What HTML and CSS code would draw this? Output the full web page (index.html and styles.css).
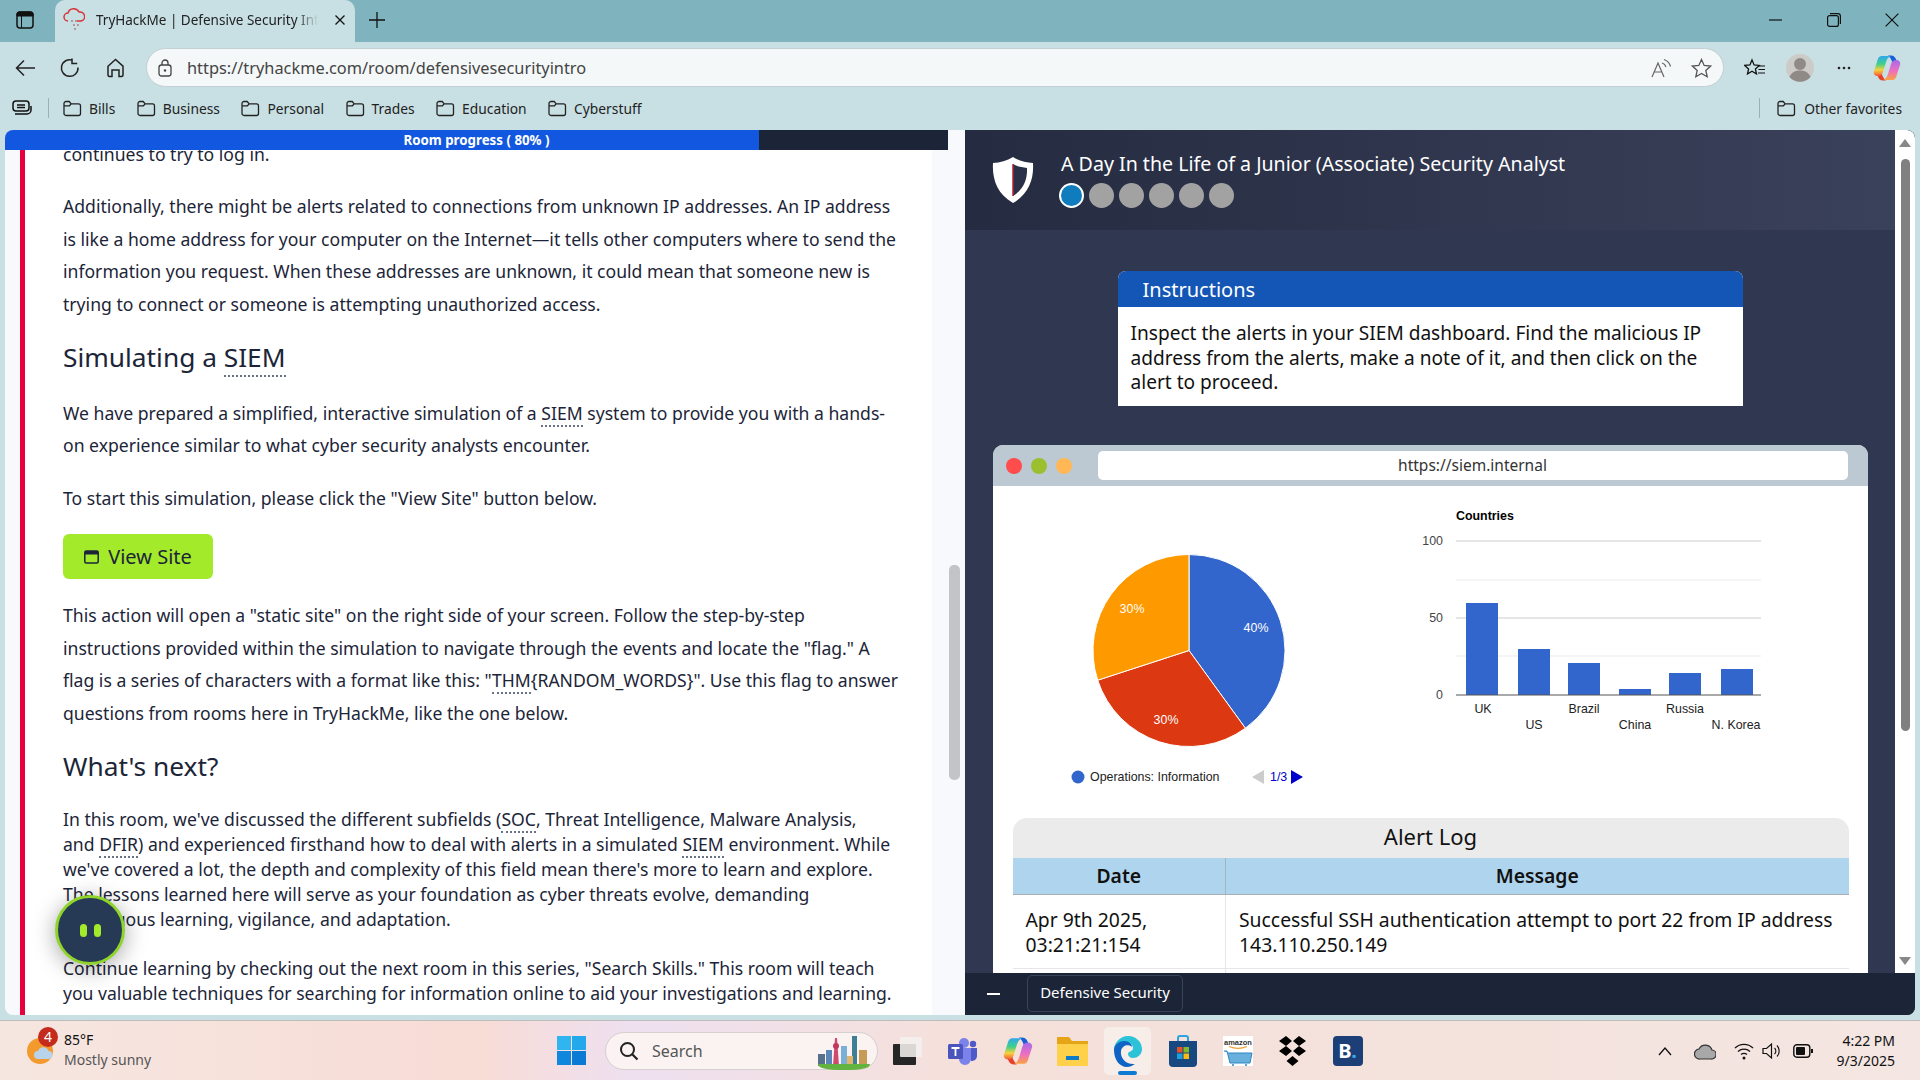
FILE: index.html
```html
<!DOCTYPE html>
<html lang="en">
<head>
<meta charset="utf-8">
<title>TryHackMe | Defensive Security Intro</title>
<link rel="stylesheet" href="styles.css">
</head>
<body>
<svg class="defs" width="0" height="0" aria-hidden="true">
  <defs>
    <symbol id="folder" viewBox="0 0 20 20"><path d="M2 5.500A2 2 0 0 1 4 3.500h3.200l2 2.400H16.500a2 2 0 0 1 2 2v7.600a2 2 0 0 1-2 2H4a2 2 0 0 1-2-2zM2 7.800h5.400l1.800-1.900" fill="none" stroke="#222" stroke-width="1.300"/></symbol>
    <linearGradient id="cop" x1="0" y1="0" x2="0" y2="1"><stop offset="0" stop-color="#2fa8ee"/><stop offset=".4" stop-color="#3fd08a"/><stop offset=".7" stop-color="#f7d23c"/><stop offset="1" stop-color="#f2563a"/></linearGradient>
    <linearGradient id="cop2" x1="0" y1="0" x2="0" y2="1"><stop offset="0" stop-color="#a66be8"/><stop offset=".55" stop-color="#ee6fc0"/><stop offset="1" stop-color="#fba23f"/></linearGradient>
    <symbol id="copilot" viewBox="0 0 28 28">
      <path d="M15 1.500h3c3 0 4.500 2 5.500 5l1 3c-1-1.500-3-1.500-5 0C19 6 17 3 15 1.500z" fill="#1a5fd8"/>
      <path d="M13 26.500h-3c-3 0-4.500-2-5.500-5l-1-3c1 1.500 3 1.500 5 0C9 22 11 25 13 26.500z" fill="#e8402a"/>
      <path d="M9 2h9c-3 1-4 3-5 6l-3 10c-1 3-3 4-5 4-3 0-5-2-4-5L4 8C5 4 6 2 9 2z" fill="url(#cop)"/>
      <path d="M19 26h-9c3-1 4-3 5-6l3-10c1-3 3-4 5-4 3 0 5 2 4 5l-3 9c-1 4-2 6-5 6z" fill="url(#cop2)"/>
    </symbol>
  </defs>
</svg>

<header class="titlebar">
  <svg class="ic-side" width="18" height="18" viewBox="0 0 18 18"><rect x="1" y="1" width="16" height="16" rx="3" fill="none" stroke="#111" stroke-width="1.500"/><path d="M1 5h16V3a2 2 0 0 0-2-2H3a2 2 0 0 0-2 2zM5.500 5v12" fill="#111" stroke="#111" stroke-width="1"/></svg>
  <div class="tab">
    <svg class="favicon" width="22" height="24" viewBox="0 0 22 24"><path d="M5 13a4 4 0 0 1 0-8 6 6 0 0 1 11-1 4.500 4.500 0 0 1 2 9h-4" fill="none" stroke="#d8343a" stroke-width="1.500"/><path d="M8 12h2v2H8zm4 0h2v2h-2zm-2 4h2v2h-2zm4 0h2v2h-2zm-3 4h2v2h-2z" fill="#b09aa0"/></svg>
    <span class="tab-title">TryHackMe | Defensive Security Intro</span>
    <svg class="tab-x" width="12" height="12" viewBox="0 0 12 12"><path d="M1.500 1.500l9 9m0-9l-9 9" stroke="#111" stroke-width="1.300"/></svg>
  </div>
  <svg class="tab-plus" width="18" height="18" viewBox="0 0 18 18"><path d="M9 1v16M1 9h16" stroke="#111" stroke-width="1.300"/></svg>
  <div class="winctl">
    <svg width="13" height="18" viewBox="0 0 13 18"><path d="M0 9h13" stroke="#111" stroke-width="1.200"/></svg>
    <svg width="14" height="14" viewBox="0 0 14 14"><rect x=".6" y="2.600" width="10.800" height="10.800" rx="2" fill="none" stroke="#111" stroke-width="1.200"/><path d="M3 .6h8a2.500 2.500 0 0 1 2.400 2.400v8" fill="none" stroke="#111" stroke-width="1.200"/></svg>
    <svg width="14" height="14" viewBox="0 0 14 14"><path d="M.6.600l12.800 12.800m0-12.800L.6 13.400" stroke="#111" stroke-width="1.200"/></svg>
  </div>
</header>

<nav class="toolbar">
  <svg class="tool back" width="20" height="18" viewBox="0 0 20 18"><path d="M20 9H1.500M9 1.500L1.500 9 9 16.500" fill="none" stroke="#222" stroke-width="1.500"/></svg>
  <svg class="tool reload" width="20" height="20" viewBox="0 0 20 20"><path d="M12.500 2.200A8.300 8.300 0 1 0 18 9.500M12 .5v5h5.200" fill="none" stroke="#222" stroke-width="1.500"/></svg>
  <svg class="tool home" width="19" height="20" viewBox="0 0 19 20"><path d="M2 8.200L9.500 1.500 17 8.200V17a1.500 1.500 0 0 1-1.500 1.500H13V12H6v6.500H3.500A1.500 1.500 0 0 1 2 17z" fill="none" stroke="#222" stroke-width="1.500"/></svg>
  <div class="address">
    <svg width="14" height="18" viewBox="0 0 14 18"><rect x="1" y="6" width="12" height="11" rx="2.500" fill="none" stroke="#444" stroke-width="1.300"/><path d="M4 6V4a3 3 0 0 1 6 0v2" fill="none" stroke="#444" stroke-width="1.300"/><circle cx="7" cy="11.500" r="1.200" fill="#444"/></svg>
    <span class="url">https://tryhackme.com/room/defensivesecurityintro</span>
    <svg class="read" width="21" height="20" viewBox="0 0 21 20"><path d="M1 19L7 5l6 14M3.500 14h7" fill="none" stroke="#666" stroke-width="1.200"/><path d="M11 5a6 6 0 0 1 4 4M13 1.500a10 10 0 0 1 6.500 7" fill="none" stroke="#666" stroke-width="1.200"/></svg>
    <svg class="star" width="21" height="20" viewBox="0 0 21 20"><path d="M10.500 1.500l2.700 5.900 6.400.7-4.800 4.300 1.400 6.300-5.700-3.300-5.700 3.300 1.400-6.300L1.400 8.100l6.400-.7z" fill="none" stroke="#555" stroke-width="1.300"/></svg>
  </div>
  <svg class="favs" width="21" height="20" viewBox="0 0 21 20"><path d="M8 2l2.100 4.900 5.200.5-3.900 3.500 1.100 5.100L8 13.300l-4.500 2.700 1.100-5.100L.7 7.400l5.200-.5z" fill="none" stroke="#111" stroke-width="1.300"/><path d="M14 8h7M14.500 11.500H21M14 15h7" stroke="#111" stroke-width="1.100"/></svg>
  <svg class="profile" width="28" height="28" viewBox="0 0 28 28"><circle cx="14" cy="14" r="14" fill="#cdcbc8"/><circle cx="14" cy="10" r="6" fill="#8f8a85"/><path d="M3.500 23c2-5 6-6.500 10.500-6.500S22.500 18 24.500 23a14 14 0 0 1-21 0z" fill="#8f8a85"/></svg>
  <svg class="more" width="14" height="4" viewBox="0 0 14 4"><circle cx="2" cy="2" r="1.300" fill="#222"/><circle cx="7" cy="2" r="1.300" fill="#222"/><circle cx="12" cy="2" r="1.300" fill="#222"/></svg>
  <svg class="copilot-top" width="28" height="28"><use href="#copilot"/></svg>
</nav>

<div class="favbar">
  <svg class="coll" width="20" height="16" viewBox="0 0 20 16"><rect x="1" y="1" width="16" height="10" rx="3" fill="none" stroke="#111" stroke-width="1.500"/><path d="M5 5h8M5 7.500h8" stroke="#111" stroke-width="1.500"/><path d="M3 14h12a4 4 0 0 0 4-4V6" fill="none" stroke="#111" stroke-width="1.500"/></svg>
  <span class="sep"></span>
  <span class="fav"><svg width="20" height="20"><use href="#folder"/></svg>Bills</span>
  <span class="fav"><svg width="20" height="20"><use href="#folder"/></svg>Business</span>
  <span class="fav"><svg width="20" height="20"><use href="#folder"/></svg>Personal</span>
  <span class="fav"><svg width="20" height="20"><use href="#folder"/></svg>Trades</span>
  <span class="fav"><svg width="20" height="20"><use href="#folder"/></svg>Education</span>
  <span class="fav"><svg width="20" height="20"><use href="#folder"/></svg>Cyberstuff</span>
  <span class="sep sep-right"></span>
  <span class="fav"><svg width="20" height="20"><use href="#folder"/></svg>Other favorites</span>
</div>

<main class="main">
  <section class="left">
    <div class="progress">Room progress ( 80% )</div>
    <div class="left-body">
      <div class="viewport">
        <article class="article">
          <p>continues to try to log in.</p>
          <p>Additionally, there might be alerts related to connections from unknown IP addresses. An IP address<br>is like a home address for your computer on the Internet—it tells other computers where to send the<br>information you request. When these addresses are unknown, it could mean that someone new is<br>trying to connect or someone is attempting unauthorized access.</p>
          <h2>Simulating a <abbr>SIEM</abbr></h2>
          <p class="gap">We have prepared a simplified, interactive simulation of a <abbr>SIEM</abbr> system to provide you with a hands-<br>on experience similar to what cyber security analysts encounter.</p>
          <p>To start this simulation, please click the "View Site" button below.</p>
          <button class="view-site"><svg width="15" height="14" viewBox="0 0 15 14"><rect x=".8" y="1" width="13.400" height="12" rx="1.500" fill="none" stroke="#1c2538" stroke-width="1.500"/><rect x=".8" y="1" width="13.400" height="3.500" fill="#1c2538"/></svg>View Site</button>
          <p>This action will open a "static site" on the right side of your screen. Follow the step-by-step<br>instructions provided within the simulation to navigate through the events and locate the "flag." A<br>flag is a series of characters with a format like this: "<abbr>THM</abbr>{RANDOM_WORDS}". Use this flag to answer<br>questions from rooms here in TryHackMe, like the one below.</p>
          <h2 class="next">What's next?</h2>
          <p class="tight">In this room, we've discussed the different subfields (<abbr>SOC</abbr>, Threat Intelligence, Malware Analysis,<br>and <abbr>DFIR</abbr>) and experienced firsthand how to deal with alerts in a simulated <abbr>SIEM</abbr> environment. While<br>we've covered a lot, the depth and complexity of this field mean there's more to learn and explore.<br>The lessons learned here will serve as your foundation as cyber threats evolve, demanding<br>continuous learning, vigilance, and adaptation.</p>
          <p class="tight">Continue learning by checking out the next room in this series, "Search Skills." This room will teach<br>you valuable techniques for searching for information online to aid your investigations and learning.</p>
        </article>
      </div>
      <div class="left-rail"><div class="left-thumb"></div></div>
      <div class="pause"><i></i><i></i></div>
    </div>
  </section>

  <section class="right">
    <div class="right-top">
      <div class="right-col">
        <div class="task-head">
          <svg class="shield" width="42" height="46" viewBox="0 0 42 46"><path d="M21 0c6 4 13 5.500 20 6 1 16-4 31-20 40C5 37 0 22 1 6c7-.5 14-2 20-6z" fill="#fff"/><path d="M21 7c4 2.500 9 3.500 14 4 .5 11-3 21-14 28z" fill="#2a3047"/><path d="M21 7v32" stroke="#b3202e" stroke-width="1.500"/></svg>
          <div>
            <div class="task-title">A Day In the Life of a Junior (Associate) Security Analyst</div>
            <div class="dots"><span class="dot on"></span><span class="dot"></span><span class="dot"></span><span class="dot"></span><span class="dot"></span><span class="dot"></span></div>
          </div>
        </div>
        <div class="task-body">
          <div class="instructions">
            <div class="ins-head">Instructions</div>
            <div class="ins-text">Inspect the alerts in your SIEM dashboard. Find the malicious IP address from the alerts, make a note of it, and then click on the alert to proceed.</div>
          </div>
          <div class="window">
            <div class="win-bar">
              <span class="light red"></span><span class="light green"></span><span class="light amber"></span>
              <div class="win-url">https://siem.internal</div>
            </div>
            <svg class="charts" width="874" height="332" viewBox="993 486 874 332">
              <path d="M1189 650.500V554.500A96 96 0 0 1 1245.400 728.200Z" fill="#3366cc" stroke="#fff"/>
              <path d="M1189 650.500L1245.400 728.200A96 96 0 0 1 1097.700 680.200Z" fill="#dc3912" stroke="#fff"/>
              <path d="M1189 650.500L1097.700 680.200A96 96 0 0 1 1189 554.500Z" fill="#ff9900" stroke="#fff"/>
              <g class="pct"><text x="1256" y="632">40%</text><text x="1166" y="724">30%</text><text x="1132" y="613">30%</text></g>
              <circle cx="1078" cy="777" r="6.500" fill="#3366cc"/>
              <text class="legend" x="1090" y="781">Operations: Information</text>
              <path d="M1264 770v14l-12-7z" fill="#ccc"/>
              <text class="pager" x="1270" y="781">1/3</text>
              <path d="M1291 770v14l12-7z" fill="#0000cc"/>
              <text class="chart-title" x="1456" y="520">Countries</text>
              <path d="M1456 541h305M1456 618h305" stroke="#ccc" stroke-width="1"/>
              <path d="M1456 580h305M1456 656h305" stroke="#ebebeb" stroke-width="1"/>
              <g fill="#3366cc">
                <rect x="1466" y="603" width="32" height="92"/><rect x="1518" y="649" width="32" height="46"/><rect x="1568" y="663" width="32" height="32"/><rect x="1619" y="689" width="32" height="6"/><rect x="1669" y="673" width="32" height="22"/><rect x="1721" y="669" width="32" height="26"/>
              </g>
              <path d="M1456 695h305" stroke="#555" stroke-width="1"/>
              <g class="axis-y"><text x="1443" y="545">100</text><text x="1443" y="622">50</text><text x="1443" y="699">0</text></g>
              <g class="axis-x"><text x="1483" y="713">UK</text><text x="1534" y="729">US</text><text x="1584" y="713">Brazil</text><text x="1635" y="729">China</text><text x="1685" y="713">Russia</text><text x="1736" y="729">N. Korea</text></g>
            </svg>
            <div class="log">
              <div class="log-title">Alert Log</div>
              <table class="log-table">
                <thead><tr><th class="col-date">Date</th><th>Message</th></tr></thead>
                <tbody>
                  <tr><td>Apr 9th 2025,<br>03:21:21:154</td><td>Successful SSH authentication attempt to port 22 from IP address<br>143.110.250.149</td></tr>
                  <tr><td>&nbsp;</td><td>&nbsp;</td></tr>
                </tbody>
              </table>
            </div>
          </div>
        </div>
      </div>
      <div class="right-rail">
        <svg width="14" height="10" viewBox="0 0 14 10"><path d="M7 1l6 8H1z" fill="#888"/></svg>
        <div class="right-thumb"></div>
        <svg class="rail-down" width="14" height="10" viewBox="0 0 14 10"><path d="M7 9L1 1h12z" fill="#888"/></svg>
      </div>
    </div>
    <div class="dock">
      <span class="dock-min"></span>
      <span class="dock-tab">Defensive Security</span>
    </div>
  </section>
</main>

<footer class="taskbar">
  <div class="weather">
    <svg class="sun" width="28" height="28" viewBox="0 0 28 28"><circle cx="13" cy="14" r="13" fill="#f29a2e"/><path d="M11 22a4 4 0 0 1 0-8 5.500 5.500 0 0 1 10.500 0 4 4 0 0 1 0 8z" fill="#b9d3ea"/></svg>
    <span class="badge">4</span>
    <div class="w-text"><div class="w-temp">85°F</div><div class="w-desc">Mostly sunny</div></div>
  </div>
  <svg class="winlogo" width="29" height="29" viewBox="0 0 29 29"><rect width="14" height="14" fill="#2fb6f0"/><rect x="15" width="14" height="14" fill="#23a8ec"/><rect y="15" width="14" height="14" fill="#0f87dc"/><rect x="15" y="15" width="14" height="14" fill="#0a7ad4"/></svg>
  <div class="search">
    <svg width="20" height="20" viewBox="0 0 20 20"><circle cx="8.500" cy="8.500" r="6.500" fill="none" stroke="#222" stroke-width="2"/><path d="M13 13l5.500 5.500" stroke="#222" stroke-width="2.200"/></svg>
    <span>Search</span>
    <svg class="city" width="58" height="38" viewBox="0 0 58 38"><rect x="2" y="22" width="7" height="12" fill="#56708c"/><rect x="10" y="18" width="6" height="16" fill="#5b86b8"/><path d="M17 34L19 6h2l2 28z" fill="#d04a70"/><circle cx="20" cy="14" r="3" fill="#c4365e"/><rect x="25" y="14" width="6" height="20" fill="#7ab0d8"/><rect x="36" y="4" width="5" height="30" fill="#3f7f96"/><rect x="31" y="24" width="6" height="10" fill="#e3b56a"/><rect x="43" y="18" width="8" height="16" fill="#c79a55"/><path d="M2 32h52c0 4-8 6-26 6S2 36 2 32z" fill="#62b33f"/></svg>
  </div>
  <div class="apps">
    <div class="app"><svg width="30" height="28" viewBox="0 0 30 28"><rect y="7" width="23" height="21" rx="1" fill="#262626"/><rect x="7" width="22" height="20" rx="1" fill="#f4f0ee" opacity=".88"/></svg></div>
    <div class="app"><svg width="30" height="28" viewBox="0 0 30 28"><circle cx="16" cy="6" r="5" fill="#7b83eb"/><circle cx="25" cy="7" r="3.200" fill="#5059c9"/><path d="M20 11h9v8a5 5 0 0 1-5 5h-1z" fill="#5059c9"/><path d="M9 11h14v11a6 6 0 0 1-12 0z" fill="#7b83eb"/><rect y="7" width="15" height="15" rx="1.500" fill="#4b53bc"/><path d="M3.500 11h8M7.500 11v8" stroke="#fff" stroke-width="1.800"/></svg></div>
    <div class="app"><svg width="30" height="30"><use href="#copilot"/></svg></div>
    <div class="app"><svg width="31" height="30" viewBox="0 0 31 30"><path d="M0 1h12l3 4h16v24H0z" fill="#e6a516"/><path d="M0 8h31v22H0z" fill="#ffd04a"/><rect x="9" y="20" width="13" height="4" fill="#0d7bc9"/></svg></div>
    <div class="app app-active"><svg width="30" height="32" viewBox="0 0 30 32"><path d="M15 1c8 0 14 6 14 13 0 6-5 9-9 9-3 0-5-2-5-4 0-3 5-2 5-6 0-3-3-6-7-6C7 7 2 12 1 17 0 8 7 1 15 1z" fill="#2cc3d8"/><path d="M1 15c0-5 5-9 10-9 5 0 8 3 8 6-3-3-10-2-11 4-1 7 5 14 14 13-3 2-5 3-8 3C6 32 1 24 1 15z" fill="#0f63c4"/></svg><span class="active-bar"></span></div>
    <div class="app"><svg width="28" height="32" viewBox="0 0 28 32"><path d="M9 6V3a2 2 0 0 1 2-2h6a2 2 0 0 1 2 2v3" fill="none" stroke="#2da3e0" stroke-width="2"/><path d="M0 6h28v22a4 4 0 0 1-4 4H4a4 4 0 0 1-4-4z" fill="#17487f"/><rect x="8" y="12" width="5.500" height="5.500" fill="#e8502a"/><rect x="14.500" y="12" width="5.500" height="5.500" fill="#7fba2a"/><rect x="8" y="18.500" width="5.500" height="5.500" fill="#1ba1e2"/><rect x="14.500" y="18.500" width="5.500" height="5.500" fill="#fcb813"/></svg></div>
    <div class="app"><svg width="30" height="30" viewBox="0 0 30 30"><rect width="30" height="30" fill="#fff"/><text class="amz" x="15" y="9">amazon</text><path d="M6 10.500c6 2.500 12 2.500 18 0" fill="none" stroke="#f0a030" stroke-width="1.200"/><path d="M1 15h3l3 12h20l2-10H5" fill="#6ab0dc" stroke="#2f86c4" stroke-width="1"/><circle cx="10" cy="29" r="1" fill="#2f86c4"/><circle cx="23" cy="29" r="1" fill="#2f86c4"/></svg></div>
    <div class="app"><svg width="29" height="30" viewBox="0 0 29 30"><path d="M8 0l6 5-6 5-7-5zM21 0l7 5-7 5-6-5zM8 10l6 5-6 5-7-5zM21 10l7 5-7 5-6-5zM14.500 20l6 5-6 5-6-5z" fill="#000"/></svg></div>
    <div class="app"><div class="booking">B<em>.</em></div></div>
  </div>
  <div class="tray">
    <svg class="t-up" width="14" height="10" viewBox="0 0 14 10"><path d="M1 9l6-7 6 7" fill="none" stroke="#111" stroke-width="1.300"/></svg>
    <svg class="t-cloud" width="22" height="20" viewBox="0 0 22 20"><path d="M6 18a5 5 0 0 1-1-10 7 7 0 0 1 13 1 4.500 4.500 0 0 1-1 9z" fill="#a8a8a8" stroke="#333" stroke-width="1.200"/></svg>
    <svg class="t-wifi" width="20" height="18" viewBox="0 0 20 18"><path d="M1 6a13 13 0 0 1 18 0M4 9.500a9 9 0 0 1 12 0M7 12.500a5 5 0 0 1 6 0" fill="none" stroke="#111" stroke-width="1.300"/><circle cx="10" cy="16" r="1.500" fill="#111"/></svg>
    <svg class="t-sound" width="20" height="18" viewBox="0 0 20 18"><path d="M1 6.500h3.500L9.500 2v14l-5-4.500H1z" fill="none" stroke="#111" stroke-width="1.200"/><path d="M12.500 6a4 4 0 0 1 0 6M15 3.500a8 8 0 0 1 0 11" fill="none" stroke="#111" stroke-width="1.100"/></svg>
    <svg class="t-batt" width="20" height="14" viewBox="0 0 20 14"><rect x=".8" y=".8" width="16" height="12.400" rx="3" fill="none" stroke="#111" stroke-width="1.400"/><rect x="3" y="3" width="9" height="8" rx="1" fill="#111"/><rect x="18" y="5" width="2" height="4" fill="#111"/></svg>
    <div class="clock"><div>4:22 PM</div><div>9/3/2025</div></div>
  </div>
</footer>
</body>
</html>
```
FILE: styles.css
```css
* { box-sizing: border-box; }
html, body { margin: 0; height: 100%; }
body {
  width: 1920px; height: 1080px; overflow: hidden;
  display: flex; flex-direction: column;
  background: #c8dfe3; color: #111;
  font-family: "Noto Sans", "Open Sans", sans-serif;
}
.defs { position: absolute; }

/* title bar */
.titlebar { height: 42px; flex: none; background: #7fb4bf; display: flex; align-items: center; padding-bottom: 3px; }
.ic-side { margin-left: 16px; flex: none; }
.tab {
  margin-left: 21px; width: 300px; height: 42px; flex: none; align-self: flex-start;
  background: #c8dfe3; border-radius: 10px 10px 0 0;
  display: flex; align-items: center; padding: 0 0 3px 8px;
}
.favicon { flex: none; }
.tab-title {
  margin-left: 11px; width: 222px; overflow: hidden; white-space: nowrap;
  font-size: 13.500px; color: #222;
  -webkit-mask-image: linear-gradient(to right, #000 90%, transparent 100%);
  mask-image: linear-gradient(to right, #000 90%, transparent 100%);
}
.tab-x { margin-left: 16px; flex: none; }
.tab-plus { margin-left: 13px; flex: none; }
.winctl { margin-left: auto; display: flex; align-items: center; gap: 45px; padding-right: 21px; }
.winctl svg:last-child { margin-left: -1px; }

/* toolbar */
.toolbar { height: 44px; flex: none; display: flex; align-items: center; padding-top: 7px; }
.back { margin-left: 15px; flex: none; }
.reload { margin-left: 25px; flex: none; }
.home { margin-left: 26px; flex: none; }
.address {
  margin-left: 21px; width: 1578px; height: 39px; flex: none;
  background: #f4f8f9; border: 1px solid #c4cfd2; border-radius: 20px;
  display: flex; align-items: center; padding: 0 11px 0 11px;
}
.url { margin-left: 15px; font-size: 16.350px; color: #444; white-space: nowrap; flex: 1; }
.read { flex: none; margin-right: 19px; }
.star { flex: none; }
.favs { margin-left: 20px; flex: none; }
.profile { margin-left: 21px; flex: none; }
.more { margin-left: 23px; flex: none; }
.copilot-top { margin-left: 22px; flex: none; }

/* favourites */
.favbar { height: 44px; flex: none; display: flex; align-items: center; padding-left: 12px; }
.coll { flex: none; }
.sep { width: 1px; height: 20px; background: #9bb0b4; margin: 0 13px 0 16px; flex: none; }
.sep-right { margin-left: auto; margin-right: 18px; }
.fav { display: flex; align-items: center; gap: 7px; font-size: 13.800px; color: #222; margin-right: 20.500px; white-space: nowrap; }
.fav:last-child { margin-right: 18px; gap: 8px; }
.fav:last-child svg { margin-left: -2px; }

/* main */
.main { flex: none; height: 885px; display: flex; padding: 0 5px; }
.left { width: 960px; flex: none; display: flex; flex-direction: column; background: #f8f9fc; border-radius: 8px 0 0 8px; overflow: hidden; }
.progress {
  width: 943px; height: 20px; flex: none;
  background: linear-gradient(90deg, #1257e0 80%, #1c2538 80%);
  color: #fff; font: 700 13.300px/20px "Noto Sans", sans-serif; text-align: center;
}
.left-body { flex: 1; position: relative; display: flex; min-height: 0; }
.viewport { margin-left: 15px; width: 912px; background: #fff; border-left: 5px solid #e8003c; overflow: hidden; flex: none; }
.article { margin-top: -12px; padding-left: 38px; font-size: 17.600px; line-height: 32.500px; color: #1c2538; white-space: nowrap; }
.article p { margin: 0 0 19.500px; }
.article p.gap { margin-bottom: 20.500px; }
.article p.tight { line-height: 25px; margin-bottom: 24px; }
.article h2 { margin: 0 0 23px; font-size: 26.300px; line-height: 34px; font-weight: 400; }
.article h2.next { margin-bottom: 24px; }
abbr { border-bottom: 2px dotted #6a7385; text-decoration: none; }
.view-site {
  display: flex; align-items: center; justify-content: center; gap: 9px;
  width: 150px; height: 45px; margin-bottom: 20px; padding: 0;
  background: #a3ea2a; border: 0; border-radius: 6px;
  font: 400 20px "Noto Sans", sans-serif; color: #1c2538;
}
.left-rail { margin-left: 17px; width: 11px; flex: none; padding-top: 415px; }
.left-thumb { height: 215px; background: #c2c4c6; border-radius: 5px; }
.pause {
  position: absolute; left: 50px; top: 745px; width: 70px; height: 70px;
  border-radius: 50%; background: #263a56; border: 3px solid #8fd42a;
  box-shadow: 0 4px 22px rgba(0,0,0,.35);
  display: flex; align-items: center; justify-content: center; gap: 7px;
}
.pause i { width: 7px; height: 13px; border-radius: 4px; background: #a3ea2a; }

/* right */
.right { width: 950px; flex: none; display: flex; flex-direction: column; border-radius: 0 8px 8px 0; overflow: hidden; background: #2f3850; }
.right-top { flex: 1; min-height: 0; display: flex; }
.right-col { width: 930px; flex: none; display: flex; flex-direction: column; min-height: 0; }
.task-head {
  height: 100px; flex: none; padding: 27px 0 0 27px; display: flex; gap: 27px;
  background: linear-gradient(90deg, #252b40, #3a415a);
}
.shield { flex: none; }
.task-title { font-size: 19.600px; line-height: 26px; color: #fff; margin-top: -6px; white-space: nowrap; }
.dots { display: flex; gap: 5px; margin-top: 6px; margin-left: -2px; }
.dot { width: 25px; height: 25px; border-radius: 50%; background: #a2a2a2; }
.dot.on { background: #0f7cbe; border: 2px solid #fff; }
.task-body { flex: 1; min-height: 0; overflow: hidden; background: #2f3850; padding-top: 41px; display: flex; flex-direction: column; align-items: center; }
.instructions { width: 625px; flex: none; background: #fff; border-radius: 8px 8px 0 0; overflow: hidden; }
.ins-head { height: 36px; background: #1456b5; color: #fff; font-size: 20px; line-height: 37px; padding-left: 25px; }
.ins-text { padding: 14px 13px 12px; font-size: 19.100px; line-height: 24.500px; color: #111; height: 99px; }
.window { width: 875px; flex: none; margin-top: 39px; background: #fff; border-radius: 10px 10px 0 0; }
.win-bar { height: 41px; background: #bcc8d2; border-radius: 10px 10px 0 0; display: flex; align-items: center; padding-left: 13px; }
.light { width: 16px; height: 16px; border-radius: 50%; margin-right: 9px; flex: none; }
.light.red { background: #ff4d4d; }
.light.green { background: #9bbf2e; }
.light.amber { background: #ffb855; margin-right: 26px; }
.win-url { width: 750px; height: 29px; background: #fff; border-radius: 5px; text-align: center; font-size: 15.500px; line-height: 29px; color: #333; }
.charts { display: block; font-family: "Liberation Sans", Arial, sans-serif; font-size: 12.400px; }
.pct text { fill: #fff; text-anchor: middle; }
.legend { fill: #222; }
.pager { fill: #0000cc; }
.chart-title { font-weight: 700; fill: #000; }
.axis-y text { fill: #444; text-anchor: end; }
.axis-x text { fill: #222; text-anchor: middle; }
.log { margin: 0 19px 0 20px; }
.log-title { height: 40px; background: #ebebeb; border-radius: 14px 14px 0 0; text-align: center; font-size: 22px; line-height: 37px; color: #111; }
.log-table { width: 100%; border-collapse: collapse; table-layout: fixed; font-size: 19.350px; line-height: 25px; color: #111; }
.log-table th { height: 36px; padding: 0; background: #afd5ee; font-weight: 600; border-bottom: 1px solid #a8aeb2; border-left: 1px solid #a8b4bc; }
.log-table th:first-child, .log-table td:first-child { border-left: 0; }
.col-date { width: 213px; }
.log-table td { height: 74px; padding: 2px 0 0 13px; border-bottom: 1px solid #e6e6e6; border-left: 1px solid #e6e6e6; white-space: nowrap; }
.right-rail { width: 20px; flex: none; background: #fff; border-radius: 0 8px 0 0; display: flex; flex-direction: column; align-items: center; padding: 8px 0 7px; }
.right-thumb { width: 9px; height: 572px; background: #808080; border-radius: 5px; margin-top: 11px; }
.rail-down { margin-top: auto; }
.dock { height: 42px; flex: none; background: #1c2538; display: flex; align-items: center; padding-left: 22px; padding-bottom: 1px; }
.dock-min { width: 13px; height: 2px; background: #fff; }
.dock-tab { margin-left: 27px; height: 37px; width: 156px; border: 1px solid #3a4458; border-radius: 5px; color: #fff; font-size: 15px; line-height: 33px; text-align: center; }

/* taskbar */
.taskbar {
  margin-top: 5px; height: 60px; flex: none; display: flex; align-items: center;
  border-top: 1px solid #c0bcbc;
  background: linear-gradient(90deg, #f6e6e0 0%, #f8dcd6 25%, #eee0f0 33%, #f5e0da 50%, #f4e2dc 75%, #f4e6e2 100%);
}
.weather { width: 557px; flex: none; display: flex; align-items: center; padding-left: 27px; position: relative; height: 100%; }
.badge { position: absolute; left: 38px; top: 6px; width: 20px; height: 20px; border-radius: 50%; background: #c42b1c; color: #fff; font-size: 14px; line-height: 20px; text-align: center; }
.w-text { margin: -2px 0 0 9px; font-size: 14px; line-height: 20px; }
.w-temp { color: #111; }
.w-desc { color: #555; }
.winlogo { flex: none; }
.search {
  margin-left: 19px; width: 273px; height: 38px; flex: none;
  background: #faf3f1; border: 1px solid #d6cfcf; border-radius: 19px;
  display: flex; align-items: center; padding-left: 13px; gap: 13px;
  font-size: 16px; color: #555;
}
.city { margin-left: auto; margin-right: 3px; }
.apps { margin-left: 2px; display: flex; align-items: center; }
.app { width: 55px; height: 48px; display: flex; align-items: center; justify-content: center; position: relative; }
.app-active { width: 47px; margin: 0 4px; background: #f7ede9; border-radius: 5px; }
.active-bar { position: absolute; bottom: 0; left: 14px; width: 19px; height: 4px; background: #0f7ad4; border-radius: 2px; }
.amz { font: 700 7.500px "Liberation Sans", sans-serif; fill: #333; text-anchor: middle; }
.booking { width: 30px; height: 30px; background: #1c3f77; border-radius: 4px; color: #fff; font: 700 20px/30px "Noto Sans", sans-serif; text-align: center; }
.booking em { color: #3aa5e8; font-style: normal; }
.tray { margin-left: auto; display: flex; align-items: center; padding-right: 25px; }
.t-cloud { margin-left: 22px; }
.t-wifi { margin-left: 18px; }
.t-sound { margin-left: 8px; }
.t-batt { margin-left: 11px; }
.clock { margin-left: 24px; text-align: right; font-size: 14px; line-height: 20px; color: #111; }
```
